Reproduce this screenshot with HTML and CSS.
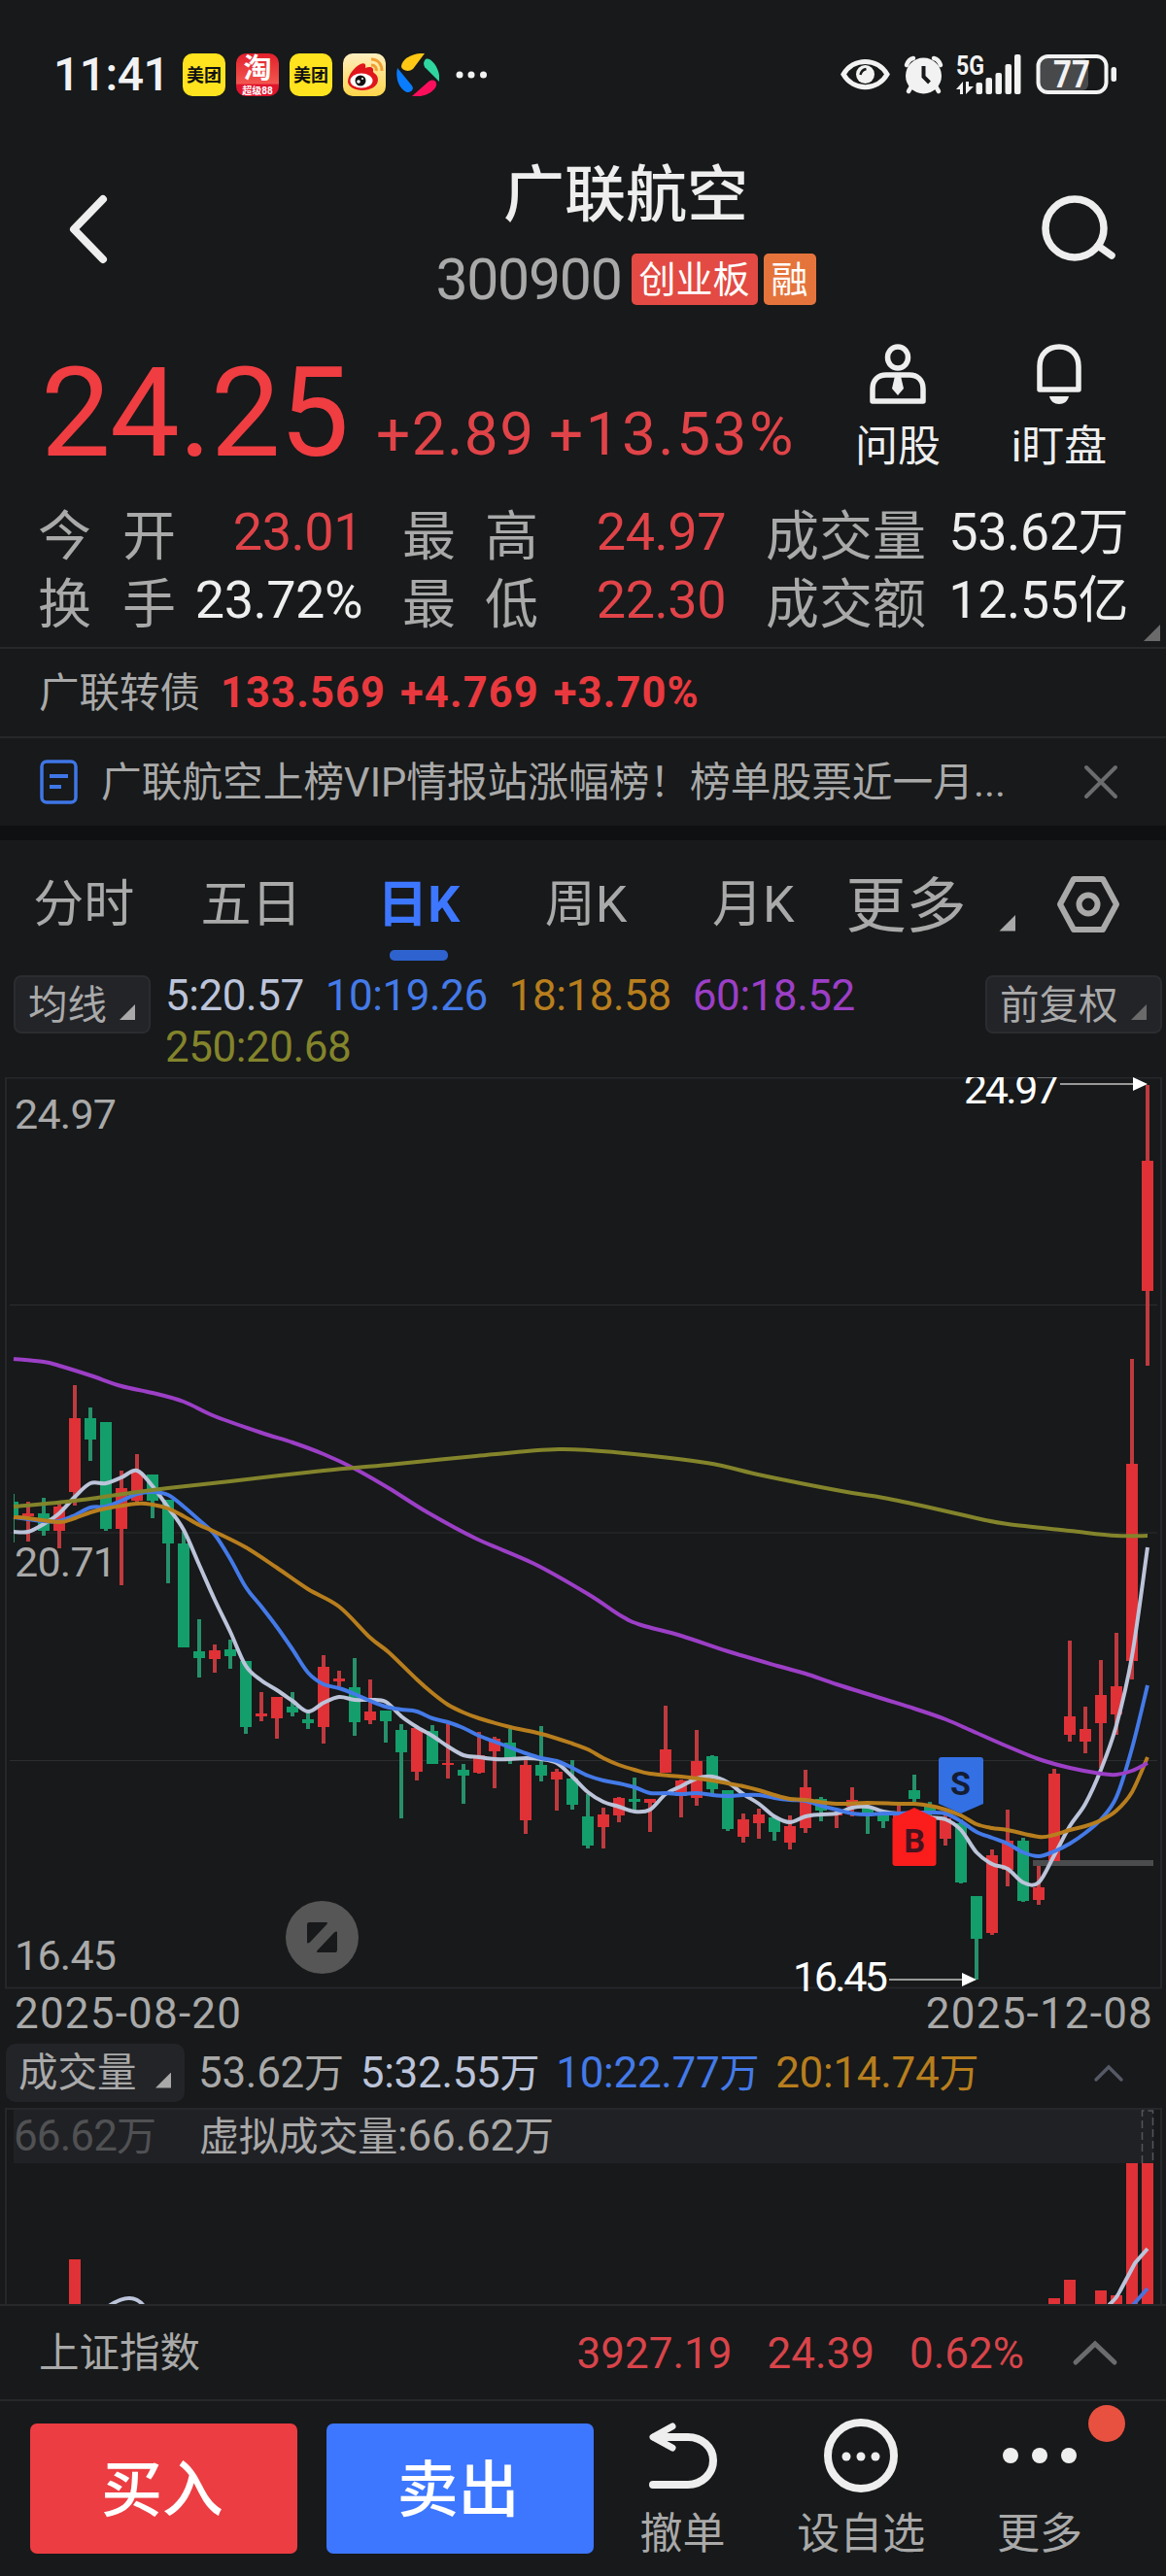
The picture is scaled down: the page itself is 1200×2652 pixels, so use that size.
FILE: index.html
```
<!DOCTYPE html>
<html lang="zh-CN">
<head>
  <meta charset="UTF-8">
  <meta name="viewport" content="width=device-width, initial-scale=1.0">
  <title>广联航空 300900</title>
  <link rel="stylesheet" href="styles.css">
</head>
<body>
  <div class="status">
    <span class="clock">11:41</span>
    <div class="apps">
      <div class="app meituan">美团</div>
      <div class="app taobao"><b>淘</b><i>超级88</i></div>
      <div class="app meituan">美团</div>
      <div class="app weibo">
        <svg width="44" height="44" viewBox="0 0 44 44">
          <path d="M5 29C5 22 12 14 18 11c4-2 6 0 5 4 4-2 9-1 8 3-1 2 5 3 5 9 0 7-8 11-16 11S5 34 5 29z" fill="#e0161c"/>
          <ellipse cx="19" cy="28" rx="11.500" ry="7.500" fill="#fff"/>
          <circle cx="18" cy="28" r="5.500" fill="#111"/>
          <circle cx="16" cy="29" r="1.800" fill="#fff"/>
          <circle cx="20" cy="26" r="1" fill="#fff"/>
          <path d="M29 6c7 0 11 5 11 12M29 12c4 0 6 3 5 6" fill="none" stroke="#f0a032" stroke-width="3"/>
        </svg>
      </div>
      <svg class="app" width="44" height="44" viewBox="0 0 44 44">
        <path d="M29 0C18-1 6 5 5 13c0 4 7 7 12 3z" fill="#ffc814"/>
        <path d="M30 6c5-3 16 10 14 23L30 15c-2-2-3-6 0-9z" fill="#2fd6a0"/>
        <path d="M16 44l17-15c4-3 9-1 8 4-2 7-14 13-25 11z" fill="#fb0f5c"/>
        <path d="M1 15l14 17c4 4 1 8-4 8C5 38-2 28 1 15z" fill="#0a7cff"/>
      </svg>
    </div>
    <svg class="dots" width="34" height="10" viewBox="0 0 34 10" fill="#f2f2f2">
      <circle cx="5" cy="5" r="3.500"/><circle cx="17" cy="5" r="3.500"/><circle cx="29.500" cy="5" r="3.500"/>
    </svg>
    <svg class="system" width="290" height="66" viewBox="862 44 290 66">
      <path d="M868 76.500c10-17.500 35-17.500 45 0-10 17.500-35 17.500-45 0z" fill="none" stroke="#f2f2f2" stroke-width="5"/>
      <circle cx="890.500" cy="76.500" r="9.500" fill="#f2f2f2"/>
      <path d="M885.500 77q1-5 6-6" fill="none" stroke="#17191a" stroke-width="2.500"/>
      <g fill="none" stroke="#f2f2f2" stroke-width="4.500" stroke-linecap="round">
        <path d="M933 67q2-6 7-7M968 67q-2-6-7-7M938 89l-3 5M963 89l3 5"/>
      </g>
      <circle cx="950.500" cy="78" r="18.500" fill="#f2f2f2"/>
      <path d="M950.500 68v11l6 6" fill="none" stroke="#17191a" stroke-width="4"/>
      <text class="net" x="984" y="77" textLength="29" lengthAdjust="spacingAndGlyphs">5G</text>
      <path d="M991 97V84l-7 8h4v5zM994 84v13l8-8h-5v-5z" fill="#f2f2f2"/>
      <g fill="#f2f2f2">
        <rect x="1004.500" y="85" width="6.500" height="12" rx="2"/>
        <rect x="1014.500" y="80" width="6.500" height="17" rx="2"/>
        <rect x="1024.500" y="75" width="6.500" height="22" rx="2"/>
        <rect x="1034.500" y="66" width="6.500" height="31" rx="2"/>
        <rect x="1044" y="56" width="6.500" height="41" rx="2"/>
      </g>
      <rect x="1070" y="60" width="50" height="33" rx="6" fill="#48494b"/>
      <rect x="1068.500" y="58" width="70" height="37" rx="10" fill="none" stroke="#f2f2f2" stroke-width="4"/>
      <rect x="1143.500" y="69" width="5.500" height="15" rx="2.500" fill="#f2f2f2"/>
      <text class="level" x="1084" y="90" textLength="38" lengthAdjust="spacingAndGlyphs">77</text>
    </svg>
  </div>

  <div class="header">
    <svg class="back" width="44" height="76" viewBox="0 0 44 76" fill="none" stroke="#eee" stroke-width="8" stroke-linecap="round" stroke-linejoin="round">
      <path d="M38 6L8 37l30 31"/>
    </svg>
    <div class="title">
      <h1>广联航空</h1>
      <div class="code">
        <span>300900</span>
        <b class="tag">创业板</b>
        <b class="tag margin">融</b>
      </div>
    </div>
    <svg class="search" width="80" height="72" viewBox="0 0 80 72" fill="none" stroke="#eee" stroke-width="7.500">
      <circle cx="36" cy="34" r="30"/>
      <path d="M60 52l14 10" stroke-linecap="round"/>
    </svg>
  </div>

  <div class="quote">
    <span class="price">24.25</span>
    <span class="change">+2.89</span>
    <span class="percent">+13.53%</span>
    <div class="action">
      <svg width="64" height="64" viewBox="0 0 64 64" fill="none" stroke="#eee" stroke-width="5.500">
        <ellipse cx="32" cy="14" rx="10.500" ry="11"/>
        <path d="M6 59V46c0-9 6-14 14-14h24c8 0 14 5 14 14v13z" stroke-linejoin="round"/>
        <path d="M29 33h6l3 13-6 7-6-7z" fill="#eee" stroke="none"/>
      </svg>
      <span>问股</span>
    </div>
    <div class="action">
      <svg width="64" height="64" viewBox="0 0 64 64" fill="none" stroke="#eee" stroke-width="5.500">
        <path d="M12 47V23C12 11 20 3 32 3s20 8 20 20v24z" stroke-linejoin="round"/>
        <path d="M22 54h20c-1 5-5 8-10 8s-9-3-10-8z" fill="#eee" stroke="none"/>
      </svg>
      <span>i盯盘</span>
    </div>
  </div>

  <div class="stats">
    <span class="label">今 开</span><span class="value up">23.01</span>
    <span class="label">最 高</span><span class="value up">24.97</span>
    <span class="label">成交量</span><span class="value">53.62<i>万</i></span>
    <span class="label">换 手</span><span class="value">23.72%</span>
    <span class="label">最 低</span><span class="value up">22.30</span>
    <span class="label">成交额</span><span class="value">12.55<i>亿</i></span>
    <i class="corner unfold"></i>
  </div>

  <div class="bond">
    <span>广联转债</span>
    <b>133.569</b>
    <b>+4.769</b>
    <b>+3.70%</b>
  </div>

  <div class="notice">
    <svg width="40" height="46" viewBox="0 0 40 46" fill="none" stroke="#3f76e6" stroke-width="3.500">
      <rect x="2" y="2" width="35" height="42" rx="5"/>
      <path d="M10 17h19M10 28h12" stroke-width="4"/>
    </svg>
    <span>广联航空上榜VIP情报站涨幅榜！榜单股票近一月...</span>
    <svg class="close" width="36" height="36" viewBox="0 0 36 36" stroke="#6b6c6d" stroke-width="4" stroke-linecap="round">
      <path d="M3 3l30 30M33 3L3 33"/>
    </svg>
  </div>

  <div class="tabs">
    <span class="tab">分时</span>
    <span class="tab">五日</span>
    <span class="tab active">日K</span>
    <span class="tab">周K</span>
    <span class="tab">月K</span>
    <span class="more">更多</span>
    <i class="corner"></i>
    <svg width="66" height="60" viewBox="0 0 66 60" fill="none" stroke="#a9a9a9" stroke-width="6">
      <path d="M18 4h30l14 26-14 26H18L4 30z" stroke-linejoin="round"/>
      <circle cx="33" cy="30" r="9.500"/>
    </svg>
  </div>

  <div class="averages">
    <span class="button">均线<i class="corner"></i></span>
    <div class="values">
      <span class="c5">5:20.57</span>
      <span class="c10">10:19.26</span>
      <span class="c18">18:18.58</span>
      <span class="c60">60:18.52</span>
      <span class="c250">250:20.68</span>
    </div>
    <span class="button adjust">前复权<i class="corner"></i></span>
  </div>

  <svg id="kline" width="1200" height="955" viewBox="0 1109 1200 955">
    <path class="grid" d="M10 1343.500h1181M10 1578h1181M10 1812.500h1181"/>
    <path class="frame" d="M6 1109v937.500h1189V1109M5 1109.500h1190"/>
    <rect x="1063" y="1915" width="124" height="6" fill="#4b4c4e"/>
    <g id="candles"></g>
    <g id="lines"></g>
    <g class="axis">
      <text x="15" y="1162" textLength="105">24.97</text>
      <text x="15" y="1623" textLength="105">20.71</text>
      <text x="15" y="2028" textLength="105">16.45</text>
    </g>
    <g class="peak">
      <text x="992" y="1136" textLength="98">24.97</text>
      <text x="816" y="2050" textLength="98">16.45</text>
      <path d="M1091 1116h76M915 2038h76" stroke="#999" stroke-width="2"/>
      <path d="M1166 1109v14l15-7zM990 2031v14l15-7z"/>
    </g>
    <path d="M969 1809h40q3 0 3 3v45l-23 10-23-10v-45q0-3 3-3z" fill="#3370e4"/>
    <text class="trade" x="988.500" y="1848">S</text>
    <path d="M941 1861l22.500 11v46q0 3-3 3h-39q-3 0-3-3v-46z" fill="#fb1c1c"/>
    <text class="trade sunk" x="941" y="1907">B</text>
    <circle cx="331.500" cy="1994.500" r="37.500" fill="#565656"/>
    <path d="M318 1979h18q2 0 0 2.500l-17 18q-3 2-3 0v-18q0-2.500 2-2.500zM345 2010h-18q-2 0 0-2.500l17-18q3-2 3 0v18q0 2.500-2 2.500z" fill="#17191a"/>
  </svg>

  <div class="dates">
    <span>2025-08-20</span>
    <span>2025-12-08</span>
  </div>

  <div class="volume-head">
    <span class="button">成交量<i class="corner"></i></span>
    <span class="total">53.62<i>万</i></span>
    <span class="c5">5:32.55<i>万</i></span>
    <span class="c10">10:22.77<i>万</i></span>
    <span class="c18">20:14.74<i>万</i></span>
    <svg width="34" height="20" viewBox="0 0 34 20" fill="none" stroke="#555965" stroke-width="3.500" stroke-linecap="round">
      <path d="M4 17L17 4l13 13"/>
    </svg>
  </div>

  <svg id="volume" width="1200" height="202" viewBox="0 2170 1200 202">
    <rect x="14" y="2172" width="1173" height="55" fill="#202125"/>
    <path class="frame" d="M6 2372v-201h1189v201"/>
    <text x="14" y="2214" fill="#505153" textLength="147">66.62<tspan>万</tspan></text>
    <text x="205" y="2214" fill="#a9a9a9" textLength="365"><tspan>虚拟成交量</tspan>:66.62<tspan>万</tspan></text>
    <path d="M1175.500 2227v-54h11v54" fill="none" stroke="#55565a" stroke-width="1.500" stroke-dasharray="8 4"/>
    <g id="bars"></g>
    <path class="line" d="M112 2374q24-16 36 0" stroke="#bcc4da"/>
    <path class="line" d="M1141 2373q8-6 12-15l15-28 13-15" stroke="#bcc4da"/>
    <path class="line" d="M1166 2373l15-17" stroke="#4c72de"/>
  </svg>

  <div class="index">
    <span class="name">上证指数</span>
    <span>3927.19</span>
    <span>24.39</span>
    <span>0.62%</span>
    <svg width="50" height="28" viewBox="0 0 50 28" fill="none" stroke="#6b6c6d" stroke-width="5" stroke-linecap="round">
      <path d="M5 23L25 4l20 19"/>
    </svg>
  </div>

  <div class="toolbar">
    <button class="buy">买入</button>
    <button class="sell">卖出</button>
    <div class="tool">
      <svg width="80" height="76" viewBox="0 0 80 76" fill="none" stroke="#eee" stroke-width="8" stroke-linecap="round" stroke-linejoin="round">
        <path d="M30 8L10 19l20 11" stroke-width="7"/>
        <path d="M12 19h34c14 0 26 10 26 24S60 68 46 68H10"/>
      </svg>
      <span>撤单</span>
    </div>
    <div class="tool">
      <svg width="80" height="76" viewBox="0 0 80 76" fill="#eee">
        <circle cx="40" cy="38" r="34" fill="none" stroke="#eee" stroke-width="8"/>
        <circle cx="25" cy="39" r="4.500"/><circle cx="40" cy="39" r="4.500"/><circle cx="55" cy="39" r="4.500"/>
      </svg>
      <span>设自选</span>
    </div>
    <div class="tool">
      <svg width="80" height="76" viewBox="0 0 80 76" fill="#eee">
        <circle cx="10" cy="38" r="8"/><circle cx="40" cy="38" r="8"/><circle cx="70" cy="38" r="8"/>
      </svg>
      <span>更多</span>
      <i class="badge"></i>
    </div>
  </div>

  <script>
    // [up, high, body top, body bottom, low], one candle every 16px
    const candles = [
      [0,1538,1546,1560,1588],[1,1546,1558,1561,1587],[0,1542,1558,1576,1581],[1,1548,1551,1576,1594],
      [1,1426,1460,1536,1550],[0,1449,1460,1482,1504],[0,1464,1464,1574,1576],[1,1514,1532,1574,1632],
      [1,1497,1515,1545,1547],[0,1518,1518,1545,1563],[0,1544,1544,1589,1630],[0,1577,1589,1696,1696],
      [0,1667,1700,1707,1727],[1,1693,1699,1708,1722],[0,1688,1698,1705,1718],[0,1710,1710,1778,1785],
      [1,1742,1764,1767,1772],[1,1747,1747,1769,1790],[0,1742,1757,1763,1767],[0,1763,1770,1774,1780],
      [1,1704,1716,1778,1795],[1,1720,1728,1731,1736],[0,1707,1737,1773,1787],[1,1729,1762,1771,1775],
      [0,1761,1761,1772,1794],[0,1775,1781,1804,1872],[1,1779,1779,1824,1833],[0,1776,1782,1816,1816],
      [1,1775,1815,1817,1831],[0,1816,1822,1828,1857],[1,1783,1807,1825,1826],[1,1788,1790,1803,1841],
      [0,1780,1794,1811,1816],[1,1812,1817,1874,1888],[0,1777,1817,1828,1834],[1,1821,1824,1832,1864],
      [0,1812,1831,1858,1863],[0,1847,1870,1900,1903],[1,1861,1868,1881,1903],[1,1850,1851,1869,1876],
      [0,1830,1852,1855,1863],[1,1852,1852,1856,1886],[1,1756,1801,1825,1825],[1,1832,1833,1849,1871],
      [1,1781,1813,1851,1859],[0,1807,1808,1842,1849],[0,1843,1843,1883,1885],[1,1867,1873,1891,1897],
      [1,1862,1868,1877,1893],[0,1870,1871,1886,1895],[1,1869,1880,1897,1904],[1,1822,1840,1882,1887],
      [0,1850,1852,1864,1875],[1,1863,1867,1869,1882],[1,1840,1853,1860,1870],[0,1859,1860,1867,1888],
      [0,1865,1867,1875,1882],[1,1855,1867,1880,1885],[0,1827,1843,1852,1855],[0,1855,1860,1866,1870],
      [1,1868,1872,1893,1900],[0,1873,1877,1938,1939],[0,1952,1952,1996,2038],[1,1904,1910,1990,1992],
      [1,1863,1895,1925,1942],[0,1892,1895,1957,1958],[1,1921,1943,1956,1961],[1,1821,1826,1916,1916],
      [1,1689,1767,1786,1793],[1,1757,1780,1793,1805],[1,1709,1745,1774,1820],[1,1681,1736,1765,1786],
      [1,1399,1507,1710,1729],[1,1117,1195,1329,1406]
    ];

    const lines = {
      '#bcc4da': [[14,1577],[29,1577],[45,1569],[61,1558],[77,1541],[93,1527],[109,1527],[125,1521],[141,1514],[157,1530],[173,1552],[189,1575],[205,1611],[221,1647],[237,1680],[253,1715],[269,1730],[285,1740],[301,1751],[317,1762],[333,1753],[349,1747],[365,1750],[381,1750],[397,1752],[413,1767],[429,1778],[445,1787],[461,1798],[477,1807],[493,1809],[509,1811],[525,1811],[541,1810],[557,1811],[573,1815],[589,1829],[605,1845],[621,1855],[637,1860],[653,1865],[669,1863],[685,1847],[701,1839],[717,1831],[733,1829],[749,1835],[765,1847],[781,1857],[797,1870],[813,1876],[829,1870],[845,1868],[861,1867],[877,1861],[893,1860],[909,1865],[925,1867],[941,1867],[957,1871],[973,1873],[989,1884],[1005,1907],[1021,1919],[1037,1924],[1053,1938],[1069,1938],[1085,1910],[1101,1880],[1117,1857],[1133,1822],[1149,1776],[1165,1705],[1181,1593]],
      '#447ae8': [[14,1562],[29,1564],[45,1566],[61,1566],[77,1560],[93,1552],[109,1551],[125,1545],[141,1538],[157,1536],[173,1539],[189,1551],[205,1565],[221,1580],[237,1605],[253,1634],[269,1654],[285,1675],[301,1698],[317,1722],[333,1734],[349,1738],[365,1744],[381,1751],[397,1757],[413,1760],[429,1762],[445,1769],[461,1773],[477,1779],[493,1787],[509,1793],[525,1799],[541,1805],[557,1810],[573,1813],[589,1820],[605,1828],[621,1833],[637,1836],[653,1840],[669,1846],[685,1846],[701,1847],[717,1846],[733,1848],[749,1849],[765,1848],[781,1848],[797,1851],[813,1853],[829,1854],[845,1859],[861,1863],[877,1867],[893,1868],[909,1867],[925,1867],[941,1866],[957,1866],[973,1867],[989,1875],[1005,1886],[1021,1892],[1037,1898],[1053,1907],[1069,1911],[1085,1906],[1101,1898],[1117,1887],[1133,1873],[1149,1850],[1165,1800],[1181,1735]],
      '#b87e1e': [[14,1562],[29,1563],[61,1567],[77,1563],[93,1557],[109,1553],[141,1548],[157,1549],[173,1553],[189,1561],[205,1570],[221,1577],[253,1593],[285,1614],[317,1636],[349,1654],[381,1686],[400,1701],[429,1729],[445,1743],[461,1755],[477,1763],[493,1769],[525,1778],[557,1785],[589,1795],[605,1801],[621,1810],[637,1817],[653,1822],[669,1826],[701,1829],[733,1833],[749,1836],[765,1839],[781,1843],[797,1848],[813,1852],[829,1853],[861,1857],[893,1856],[925,1857],[941,1857],[957,1859],[973,1863],[989,1869],[1005,1878],[1021,1882],[1037,1884],[1069,1891],[1085,1889],[1101,1884],[1117,1880],[1133,1874],[1149,1864],[1165,1845],[1181,1809]],
      '#9c3fc6': [[14,1399],[45,1402],[61,1406],[93,1416],[125,1427],[157,1434],[189,1443],[221,1458],[269,1475],[301,1485],[333,1497],[365,1512],[400,1532],[440,1557],[490,1584],[550,1610],[605,1641],[640,1664],[660,1673],[701,1684],[749,1700],[800,1715],[829,1723],[861,1734],[909,1749],[941,1759],[973,1770],[1005,1784],[1037,1798],[1069,1811],[1101,1820],[1133,1826],[1149,1827],[1165,1823],[1181,1815]],
      '#83842b': [[14,1551],[77,1545],[141,1536],[173,1532],[237,1525],[333,1514],[400,1508],[490,1499],[575,1492],[642,1496],[727,1506],[780,1518],[829,1528],[877,1537],[909,1542],[957,1552],[1005,1563],[1037,1569],[1101,1576],[1149,1581],[1181,1581]]
    };

    // [x, top] of the volume bars that reach above the index row
    const bars = [[71,2326],[1079,2366],[1095,2347],[1127,2358],[1143,2363],[1159,2227],[1175,2227]];

    function add(parent, name, attrs) {
      const el = document.createElementNS('http://www.w3.org/2000/svg', name);
      for (const key in attrs) el.setAttribute(key, attrs[key]);
      document.getElementById(parent).appendChild(el);
    }

    candles.forEach(([up, high, top, bottom, low], i) => {
      const x = 13 + i * 16;
      const left = Math.max(x - 6, 14);
      add('candles', 'rect', { x: Math.max(x - 2, 14), y: high, width: i ? 4 : 1, height: low - high, fill: up ? '#be3a3e' : '#27906a' });
      add('candles', 'rect', { x: left, y: top, width: x + 6 - left, height: bottom - top, fill: up ? '#df3136' : '#149e6b' });
    });

    // draws a smooth curve through the points
    function curve(p) {
      let d = `M${p[0]}`;
      for (let i = 0; i < p.length - 1; i++) {
        const a = p[i - 1] || p[i], b = p[i], c = p[i + 1], e = p[i + 2] || c;
        d += `C${b[0] + (c[0] - a[0]) / 6} ${b[1] + (c[1] - a[1]) / 6} ${c[0] - (e[0] - b[0]) / 6} ${c[1] - (e[1] - b[1]) / 6} ${c[0]} ${c[1]}`;
      }
      return d;
    }

    ['#bcc4da', '#447ae8', '#b87e1e', '#9c3fc6', '#83842b'].forEach(color => {
      add('lines', 'path', { class: 'line', d: curve(lines[color]), stroke: color });
    });

    bars.forEach(([x, top]) => {
      add('bars', 'rect', { x: x, y: top, width: 12, height: 2372 - top, fill: '#df3136' });
    });
  </script>
</body>
</html>
```
FILE: styles.css
```
* {
  box-sizing: border-box;
}

body {
  width: 1200px;
  height: 2652px;
  margin: 0;
  overflow: hidden;
  background-color: #17191a;
  color: #a9a9a9;
  font-family: Roboto, 'Noto Sans CJK SC', sans-serif;
  font-size: 44px;
  line-height: 1;
}

svg {
  display: block;
  flex: none;
}

span {
  white-space: nowrap;
}

i {
  font-style: normal;
}

/* status bar */
.status {
  display: flex;
  align-items: center;
  height: 154px;
  padding-left: 55px;
}

.clock {
  width: 133px;
  color: #f2f2f2;
  font-size: 48px;
  font-weight: 500;
  letter-spacing: -0.500px;
}

.apps {
  display: flex;
  gap: 11px;
}

.app {
  width: 44px;
  height: 44px;
  border-radius: 10px;
  overflow: hidden;
}

.meituan {
  background-color: #ffe31e;
  color: #111;
  font-size: 18px;
  font-weight: bold;
  line-height: 46px;
  text-align: center;
}

.taobao {
  display: flex;
  flex-direction: column;
  align-items: center;
  background: linear-gradient(#e3202c, #f2564e 70%, #e0142e 74%);
  color: #fff;
}

.taobao b {
  font-size: 29px;
  line-height: 33px;
}

.taobao i {
  font-size: 10px;
  font-weight: bold;
  line-height: 11px;
}

.weibo {
  background: linear-gradient(#ffefc0, #ffd54a);
}

.dots {
  margin-left: 16px;
}

.system {
  margin: 0 48px 0 auto;
}

.net {
  fill: #f2f2f2;
  font-size: 28px;
  font-weight: bold;
}

.level {
  fill: #f2f2f2;
  font-size: 38px;
  font-weight: bold;
}

/* header */
.header {
  display: flex;
  align-items: center;
  justify-content: space-between;
  height: 165px;
  padding: 0 50px 0 68px;
}

.title {
  display: flex;
  flex-direction: column;
  align-items: center;
  gap: 23px;
  margin: 5px 0 0 106px;
}

h1 {
  margin: 0;
  color: #eee;
  font-size: 63px;
  font-weight: 500;
  line-height: 74px;
}

.code {
  display: flex;
  align-items: center;
  gap: 6px;
  height: 54px;
  font-size: 59px;
}

.code span {
  margin-right: 4px;
  letter-spacing: -1.300px;
}

.tag {
  height: 53px;
  padding: 0 8px;
  border-radius: 5px;
  background-color: #e24a43;
  color: #fff;
  font-size: 38px;
  font-weight: normal;
  line-height: 55px;
}

.margin {
  background-color: #e5743c;
}

/* price */
.quote {
  display: flex;
  height: 194px;
  padding: 0 27px 0 42px;
  color: #e04348;
}

.price {
  width: 345px;
  margin-top: 39px;
  color: #ef3d42;
  font-size: 128px;
  letter-spacing: -1px;
  line-height: 134px;
}

.change,
.percent {
  margin-top: 84px;
  font-size: 62px;
  letter-spacing: 1.500px;
  line-height: 88px;
}

.change {
  width: 178px;
}

.percent {
  width: 276px;
  letter-spacing: 2.500px;
}

.action {
  display: flex;
  flex-direction: column;
  align-items: center;
  gap: 17px;
  width: 166px;
  padding-top: 35px;
  color: #eee;
  line-height: 50px;
}

/* open, high, turnover */
.stats {
  position: relative;
  display: grid;
  grid-template-columns: 142px 233px 140px 234px 164px 250px;
  grid-auto-rows: 70px;
  height: 155px;
  padding-left: 39px;
  border-bottom: 2px solid #26282a;
  font-size: 54px;
  letter-spacing: -0.500px;
  line-height: 70px;
}

.label {
  font-size: 55px;
  letter-spacing: 0;
  line-height: 78px;
  text-align-last: justify;
}

.value {
  padding-right: 41px;
  color: #eee;
  text-align: right;
}

.value i {
  font-size: 52px;
}

.value.up {
  color: #e04348;
}

.corner {
  display: inline-block;
  width: 17px;
  height: 17px;
  background-color: #a9a9a9;
  clip-path: polygon(100% 0, 100% 100%, 0 100%);
}

.unfold {
  position: absolute;
  right: 6px;
  bottom: 6px;
  background-color: #6a6a6a;
}

/* convertible bond */
.bond {
  display: flex;
  align-items: center;
  height: 92px;
  padding: 2px 0 0 40px;
  border-bottom: 2px solid #26282a;
  font-size: 41.500px;
}

.bond span {
  width: 187px;
}

.bond b {
  margin-right: 15px;
  color: #e9393f;
  font-size: 43.500px;
  letter-spacing: 1.100px;
}

.notice {
  display: flex;
  align-items: center;
  height: 105px;
  padding: 0 49px 0 41px;
  border-bottom: 15px solid #0f1011;
  font-size: 41.700px;
}

.notice span {
  margin: 2px 0 0 23px;
}

.close {
  margin-left: auto;
}

/* chart period */
.tabs {
  display: flex;
  align-items: center;
  height: 132px;
  font-size: 52px;
}

.tab {
  position: relative;
  width: 172.300px;
  line-height: 137px;
  text-align: center;
}

.active {
  color: #3d76ff;
  font-weight: bold;
}

.active::after {
  content: '';
  position: absolute;
  left: 56px;
  bottom: 11px;
  width: 60px;
  height: 11px;
  border-radius: 5px;
  background-color: #2e63cf;
}

.more {
  width: 158px;
  margin: 5px 0 0 9px;
  font-size: 62px;
}

.tabs .corner {
  margin: 38px 42px 0 0;
}

/* moving averages */
.averages {
  display: flex;
  align-items: flex-start;
  height: 112px;
  padding: 2px 4px 0 14px;
}

.button {
  display: flex;
  align-items: center;
  justify-content: space-between;
  width: 141px;
  height: 60px;
  padding: 2px 14px 0 13px;
  border: 2px solid #2b2c2f;
  border-radius: 8px;
  background-color: #232428;
  font-size: 40.500px;
}

.button .corner {
  margin-top: 14px;
  width: 16px;
  height: 16px;
}

.averages .button {
  margin-top: 5px;
}

.adjust {
  width: 182px;
  margin-left: auto;
}

.adjust .corner {
  background-color: #6a6a6a;
}

.values {
  display: flex;
  flex-wrap: wrap;
  column-gap: 22px;
  width: 760px;
  margin-left: 15px;
  letter-spacing: -0.450px;
  line-height: 53px;
}

.c5 { color: #bcc4da; }
.c10 { color: #447ae8; }
.c18 { color: #b87e1e; }
.c60 { color: #9c3fc6; }
.c250 { color: #83842b; }

/* charts */
.grid,
.frame {
  fill: none;
  stroke: #2c2d2f;
}

.frame {
  stroke: #26272a;
  stroke-width: 2;
}

.line {
  fill: none;
  stroke-width: 4;
}

.axis,
.peak {
  font-size: 43px;
}

.axis {
  fill: #a9a9a9;
}

.peak {
  fill: #fff;
}

.trade {
  fill: #141d33;
  font-size: 34px;
  font-weight: bold;
  text-anchor: middle;
}

.sunk {
  fill: #43141f;
}

/* the low price label hangs a little below the chart frame */
.dates {
  display: flex;
  justify-content: space-between;
  height: 48px;
  margin-top: -15px;
  padding: 0 13px 0 15px;
  letter-spacing: 1.200px;
  line-height: 49px;
}

.volume-head {
  display: flex;
  align-items: center;
  gap: 17px;
  height: 73px;
  padding: 0 42px 0 6px;
  letter-spacing: -0.300px;
}

.volume-head .button {
  width: 184px;
  margin-right: -3px;
  border: none;
  border-radius: 10px;
  letter-spacing: 0;
}

.volume-head i {
  font-size: 41px;
}

.volume-head svg {
  margin-left: auto;
}

#volume {
  font-size: 44px;
}

#volume tspan {
  font-size: 41px;
}

/* index and toolbar */
.index {
  display: flex;
  align-items: center;
  height: 98px;
  padding: 2px 48px 0 40px;
  border-top: 2px solid #26282a;
  color: #d8444a;
}

.index span {
  margin-left: 36px;
}

.index .name {
  margin: 0 auto 0 0;
  color: #a9a9a9;
  font-size: 41.500px;
}

.index svg {
  margin-left: 48px;
}

.toolbar {
  display: flex;
  height: 182px;
  padding: 23px 38px 0 31px;
  border-top: 2px solid #26282a;
}

.toolbar button {
  width: 275px;
  height: 134px;
  margin-right: 30px;
  padding: 3px 3px 0 0;
  border: none;
  border-radius: 7px;
  color: #fff;
  font: 500 63px/131px Roboto, 'Noto Sans CJK SC', sans-serif;
}

.toolbar .buy {
  background-color: #ec3d42;
}

.toolbar .sell {
  margin-right: 0;
  background-color: #3d77ff;
}

.tool {
  position: relative;
  display: flex;
  flex-direction: column;
  align-items: center;
  gap: 18px;
  width: 184px;
  margin-top: -5px;
  line-height: 50px;
}

.badge {
  position: absolute;
  top: -14px;
  right: 4px;
  width: 38px;
  height: 38px;
  border-radius: 50%;
  background-color: #e85140;
}
```
